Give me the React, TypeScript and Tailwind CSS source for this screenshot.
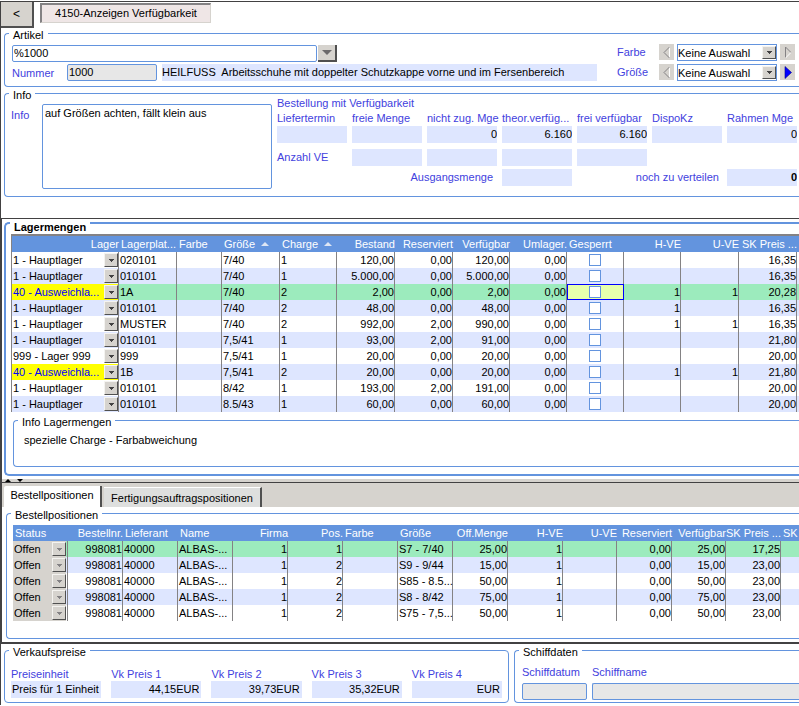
import type { ReactNode } from 'react';
import clsx from 'clsx';

type Column = { label: string; width?: string; right?: boolean; sorted?: boolean };

const stockColumns: Column[] = [
  { label: 'Lager', width: 'w-[107px]', right: true },
  { label: 'Lagerplat...', width: 'w-[58px]' },
  { label: 'Farbe', width: 'w-[45px]' },
  { label: 'Größe', width: 'w-[58px]', sorted: true },
  { label: 'Charge', width: 'w-[57px]', sorted: true },
  { label: 'Bestand', width: 'w-[58px]', right: true },
  { label: 'Reserviert', width: 'w-[58px]', right: true },
  { label: 'Verfügbar', width: 'w-[57px]', right: true },
  { label: 'Umlager.', width: 'w-[57px]', right: true },
  { label: 'Gesperrt', width: 'w-[57px]' },
  { label: 'H-VE', width: 'w-[57px]', right: true },
  { label: 'U-VE', width: 'w-[58px]', right: true },
  { label: 'SK Preis ...', width: 'w-[58px]', right: true },
  { label: '' }
];

const stockRows = [
  ['1 - Hauptlager', '020101', '', '7/40', '1', '120,00', '0,00', '120,00', '0,00', '', '', '', '16,35'],
  ['1 - Hauptlager', '010101', '', '7/40', '1', '5.000,00', '0,00', '5.000,00', '0,00', '', '', '', '16,35'],
  ['40 - Ausweichla...', '1A', '', '7/40', '2', '2,00', '0,00', '2,00', '0,00', '', '1', '1', '20,28'],
  ['1 - Hauptlager', '010101', '', '7/40', '2', '48,00', '0,00', '48,00', '0,00', '', '1', '', '16,35'],
  ['1 - Hauptlager', 'MUSTER', '', '7/40', '2', '992,00', '2,00', '990,00', '0,00', '', '1', '1', '16,35'],
  ['1 - Hauptlager', '010101', '', '7,5/41', '1', '93,00', '2,00', '91,00', '0,00', '', '', '', '21,80'],
  ['999 - Lager 999', '999', '', '7,5/41', '1', '20,00', '0,00', '20,00', '0,00', '', '', '', '20,00'],
  ['40 - Ausweichla...', '1B', '', '7,5/41', '2', '20,00', '0,00', '20,00', '0,00', '', '1', '1', '21,80'],
  ['1 - Hauptlager', '010101', '', '8/42', '1', '193,00', '2,00', '191,00', '0,00', '', '', '', '20,00'],
  ['1 - Hauptlager', '010101', '', '8.5/43', '1', '60,00', '0,00', '60,00', '0,00', '', '', '', '20,00']
];

const orderColumns: Column[] = [
  { label: 'Status', width: 'w-[55px]' },
  { label: 'Bestellnr.', width: 'w-[55px]', right: true },
  { label: 'Lieferant', width: 'w-[55px]' },
  { label: 'Name', width: 'w-[55px]' },
  { label: 'Firma', width: 'w-[55px]', right: true },
  { label: 'Pos.', width: 'w-[55px]', right: true },
  { label: 'Farbe', width: 'w-[55px]' },
  { label: 'Größe', width: 'w-[55px]' },
  { label: 'Off.Menge', width: 'w-[55px]', right: true },
  { label: 'H-VE', width: 'w-[55px]', right: true },
  { label: 'U-VE', width: 'w-[54px]', right: true },
  { label: 'Reserviert', width: 'w-[55px]', right: true },
  { label: 'Verfügbar', width: 'w-[54px]', right: true },
  { label: 'SK Preis ...', width: 'w-[55px]', right: true },
  { label: 'SK' }
];

const orderRows = [
  ['Offen', '998081', '40000', 'ALBAS-...', '1', '1', '', 'S7 - 7/40', '25,00', '1', '', '0,00', '25,00', '17,25', ''],
  ['Offen', '998081', '40000', 'ALBAS-...', '1', '2', '', 'S9 - 9/44', '15,00', '1', '', '0,00', '15,00', '23,00', ''],
  ['Offen', '998081', '40000', 'ALBAS-...', '1', '2', '', 'S85 - 8.5...', '50,00', '1', '', '0,00', '50,00', '23,00', ''],
  ['Offen', '998081', '40000', 'ALBAS-...', '1', '2', '', 'S8 - 8/42', '75,00', '1', '', '0,00', '75,00', '23,00', ''],
  ['Offen', '998081', '40000', 'ALBAS-...', '1', '2', '', 'S75 - 7,5...', '50,00', '1', '', '0,00', '50,00', '23,00', '']
];

const availability = [
  { label: 'Liefertermin', value: '' },
  { label: 'freie Menge', value: '' },
  { label: 'nicht zug. Mge', value: '0' },
  { label: 'theor.verfüg...', value: '6.160' },
  { label: 'frei verfügbar', value: '6.160' },
  { label: 'DispoKz', value: '' },
  { label: 'Rahmen Mge', value: '0' }
];

const prices = [
  { label: 'Preiseinheit', value: 'Preis für 1 Einheit' },
  { label: 'Vk Preis 1', value: '44,15EUR' },
  { label: 'Vk Preis 2', value: '39,73EUR' },
  { label: 'Vk Preis 3', value: '35,32EUR' },
  { label: 'Vk Preis 4', value: 'EUR' }
];

function Group({ title, className, legendClass = 'h-3', children }: { title: string; className?: string; legendClass?: string; children: ReactNode }) {
  return (
    <fieldset className={clsx('min-w-0 border-[#6394de]', className)}>
      <legend className={clsx('ml-1 px-1 leading-4', legendClass)}>{title}</legend>
      {children}
    </fieldset>
  );
}

function ArrowBox({ muted }: { muted?: boolean }) {
  return (
    <span className="pointer-events-none absolute top-px right-0 bottom-px flex w-[14px] items-center justify-center border border-t-[#f4f3f0] border-r-[#505050] border-b-[#505050] border-l-[#f4f3f0] bg-[#d6d3ce]">
      <svg width="5" height="3" viewBox="0 0 5 3" shapeRendering="crispEdges">
        <path d="M0 0h5v1H4v1H3v1H2V2H1V1H0z" fill={muted ? '#848284' : '#424142'} />
      </svg>
    </span>
  );
}

function Combo({ label, value, id, className, muted }: { label?: string; value: string; id?: string; className?: string; muted?: boolean }) {
  return (
    <div className={clsx('relative', className)}>
      <select id={id} aria-label={label} disabled={muted} className={clsx('block h-full w-full appearance-none truncate leading-4 opacity-100', id ? 'pb-px' : 'pl-px')}>
        <option>{value}</option>
      </select>
      <ArrowBox muted={muted} />
    </div>
  );
}

function Step({ label, next, active }: { label: string; next?: boolean; active?: boolean }) {
  return (
    <button aria-label={label} className="flex h-4 w-[15px] items-center justify-center bg-[#d6d3ce]">
      <svg className="shrink-0" width="8" height="13" viewBox="0 0 8 13">
        {active ? (
          <path d="M1 .5v12l6.500-6z" fill="#0000ff" stroke="#000084" strokeWidth=".6" />
        ) : next ? (
          <>
            <path d="M1.500 12V1l5.500 5.500" fill="none" stroke="#848284" />
            <path d="M7 6.500 1.500 12" fill="none" stroke="#ffffff" />
          </>
        ) : (
          <>
            <path d="M6.500 12V1" fill="none" stroke="#ffffff" />
            <path d="M1 6.500 6.500 12" fill="none" stroke="#848284" />
            <path d="M6.500 1 1 6.500" fill="none" stroke="#848284" />
          </>
        )}
      </svg>
    </button>
  );
}

function Value({ id, label, value = '', className }: { id?: string; label?: string; value?: string; className?: string }) {
  return <input id={id} aria-label={label} readOnly defaultValue={value} className={clsx('h-[17px] w-full min-w-0 bg-[#dee6ff] pb-[2px] leading-4', className)} />;
}

function Head({ columns }: { columns: Column[] }) {
  return (
    <thead>
      <tr className="h-4 bg-[#6394de] text-white">
        {columns.map((col, i) => (
          <th key={i} className={clsx('p-0 font-normal whitespace-nowrap', col.width, col.right ? 'text-right' : 'pl-[2px] text-left')}>
            <div className={clsx('flex items-center gap-1.5', col.right && 'justify-end')}>
              {col.label}
              {col.sorted && (
                <svg width="8" height="4" viewBox="0 0 8 4">
                  <path d="M0 4h8L4 0z" fill="#dee6f4" />
                </svg>
              )}
            </div>
          </th>
        ))}
      </tr>
    </thead>
  );
}

export default function App() {
  return (
    <main className="flex w-full flex-col overflow-hidden bg-white pt-px font-['Liberation_Sans',sans-serif] text-[11px] leading-4 text-black">
      <div className="border-t border-l border-[#424142]">
        <header className="flex items-start gap-[6px]">
          <button className="h-[26px] w-[33px] border-r-2 border-b-2 border-[#505050] bg-[#d6d3ce] text-xs">&lt;</button>
          <h1 className="mt-px h-5 w-[171px] border-t-2 border-r border-b border-l-2 border-t-[#848284] border-r-[#d6d3ce] border-b-[#d6d3ce] border-l-[#848284] bg-[#efe6e6] text-center">4150-Anzeigen Verfügbarkeit</h1>
        </header>

        <Group title="Artikel" className="-mt-px ml-[3px] rounded-l-[4px] border-y border-l">
          <div className="flex pt-[5px] pr-1 pb-[5px] pl-[7px]">
            <div className="flex flex-1 flex-col gap-[2px] pt-px">
              <div className="flex gap-px">
                <input aria-label="Artikelsuche" defaultValue="%1000" className="h-[17px] w-[305px] rounded-xs border border-[#6394de] pb-px pl-px" />
                <button aria-label="Artikel auswählen" className="flex h-[17px] w-[19px] items-center justify-center border-r-2 border-b-2 border-[#505050] bg-[#d6d3ce]">
                  <svg width="10" height="5" viewBox="0 0 10 5"><path d="M0 0h10L5 5z" fill="#6b696b" /></svg>
                </button>
              </div>
              <div className="flex">
                <label htmlFor="nummer" className="w-[55px] pt-px text-[#4241de]">Nummer</label>
                <input id="nummer" readOnly defaultValue="1000" className="h-[17px] w-[90px] rounded-xs border border-[#6394de] bg-[#e7e7e7] pb-px pl-px" />
                <Value label="Bezeichnung" value="HEILFUSS  Arbeitsschuhe mit doppelter Schutzkappe vorne und im Fersenbereich" className="ml-[5px] flex-1" />
              </div>
            </div>
            <div className="ml-5 grid grid-cols-[39px_15px_100px_15px] content-start gap-x-[3px] gap-y-[3px]">
              <label htmlFor="farbe" className="text-[#4241de]">Farbe</label>
              <Step label="Vorige Farbe" />
              <Combo id="farbe" value="Keine Auswahl" className="h-[17px] border border-[#6394de]" />
              <Step label="Nächste Farbe" next />
              <label htmlFor="groesse" className="text-[#4241de]">Größe</label>
              <Step label="Vorige Größe" />
              <Combo id="groesse" value="Keine Auswahl" className="h-[17px] border border-[#6394de]" />
              <Step label="Nächste Größe" next active />
            </div>
          </div>
        </Group>

        <Group title="Info" className="ml-[3px] rounded-l-[4px] border-y border-l">
          <div className="flex pt-[5px] pr-[2px] pb-[7px] pl-[6px]">
            <label htmlFor="info" className="w-[31px] pt-[3px] text-[#4241de]">Info</label>
            <textarea id="info" defaultValue="auf Größen achten, fällt klein aus" className="mr-[5px] h-[85px] w-[230px] resize-none rounded-xs border border-[#6394de] px-[2px]" />
            <div className="-mt-[9px] flex-1 text-[#4241de]">
              <h2 className="h-[15px]">Bestellung mit Verfügbarkeit</h2>
              <div className="grid grid-cols-7 gap-x-[5px]">
                {availability.map((item) => (
                  <label key={item.label} className="block whitespace-nowrap">
                    {item.label}
                    <Value value={item.value} className="block text-right text-black" />
                  </label>
                ))}
              </div>
              <div className="mt-[6px] grid grid-cols-7 gap-x-[5px] gap-y-[3px]">
                <span>Anzahl VE</span>
                <Value label="Anzahl VE freie Menge" />
                <Value label="Anzahl VE nicht zugeteilt" />
                <Value label="Anzahl VE theoretisch verfügbar" />
                <Value label="Anzahl VE frei verfügbar" />
                <label htmlFor="ausgang" className="col-span-2 col-start-2 pr-1 text-right">Ausgangsmenge</label>
                <Value id="ausgang" />
                <label htmlFor="verteilen" className="col-span-2 pr-[3px] text-right">noch zu verteilen</label>
                <Value id="verteilen" value="0" className="text-right font-bold text-black" />
              </div>
            </div>
          </div>
        </Group>
        <div className="h-[21px]" />
      </div>

      <div className="border-t border-l-2 border-[#424142]">
        <Group title="Lagermengen" className="ml-[2px] rounded-l-[5px] border-y-2 border-l-2 pb-[7px]" legendClass="h-2 font-bold">
          <div className="mt-[7px] ml-[5px] border-t-2 border-l border-[#848284]">
            <table className="w-full table-fixed border-separate border-spacing-0">
              <Head columns={stockColumns} />
              <tbody>
                {stockRows.map((row, r) => (
                  <tr key={r} className={clsx('h-4', r === 2 ? 'bg-[#9cebbd]' : r % 2 ? 'bg-[#dee6ff]' : 'bg-white')}>
                    {row.map((cell, c) => (
                      <td
                        key={c}
                        className={clsx(
                          'border-r border-[#848284] p-0 whitespace-nowrap',
                          c > 4 && 'text-right',
                          c > 0 && c !== 9 && 'pl-px',
                          c === 0 && row[0].startsWith('40') && 'bg-[#ffff00] text-[#0000ff]',
                          c === 9 && r === 2 && 'bg-[#e7ffad] outline-1 -outline-offset-1 outline-[#0000ff]'
                        )}
                      >
                        {c === 0 ? (
                          <Combo label="Lager" value={cell} className="h-4" />
                        ) : c === 9 ? (
                          <input type="checkbox" aria-label="Gesperrt" className="mx-auto block size-3 appearance-none border border-[#6394de] bg-white" />
                        ) : (
                          cell
                        )}
                      </td>
                    ))}
                    <td className="p-0" />
                  </tr>
                ))}
              </tbody>
            </table>
          </div>
          <Group title="Info Lagermengen" className="mt-[2px] ml-[7px] rounded-l-[4px] border-y border-l">
            <p className="h-10 pt-[6px] pl-[10px]">spezielle Charge - Farbabweichung</p>
          </Group>
        </Group>
        <div className="mt-[3px] flex h-[4px] items-end gap-[6px] border-b border-[#424142] bg-[#d6d3ce] pl-[3px]">
          <svg width="6" height="3" viewBox="0 0 6 3"><path d="M0 3h6L3 0z" /></svg>
          <svg width="6" height="3" viewBox="0 0 6 3"><path d="M0 0h6L3 3z" /></svg>
        </div>

        <div role="tablist" className="flex items-end gap-[2px] bg-[#d6d3ce] pt-[3px] pl-[2px]">
          <button role="tab" aria-selected="true" className="h-[21px] w-[98px] rounded-tl-xs border-r-2 border-[#505050] bg-white pb-[3px]">Bestellpositionen</button>
          <button role="tab" aria-selected="false" className="h-5 w-[158px] border-t border-r-2 border-t-white border-r-[#505050] bg-[#dedfde]">Fertigungsauftragspositionen</button>
        </div>

        <Group title="Bestellpositionen" className="ml-[4px] rounded-l-[4px] border-y border-l pb-[17px]">
          <table className="mt-[6px] ml-[6px] w-[calc(100%-6px)] table-fixed border-separate border-spacing-0">
            <Head columns={orderColumns} />
            <tbody>
              {orderRows.map((row, r) => (
                <tr key={r} className={clsx('h-4', r === 0 ? 'bg-[#9cebbd]' : r % 2 ? 'bg-[#dee6ff]' : 'bg-white')}>
                  {row.map((cell, c) => (
                    <td key={c} className={clsx('p-0 whitespace-nowrap', c < 14 && 'border-r border-[#848284]', c > 0 && 'pl-px', orderColumns[c].right && 'text-right')}>
                      {c === 0 ? <Combo label="Status" value={cell} muted className="h-4 w-[53px] bg-[#d6d3ce]" /> : cell}
                    </td>
                  ))}
                </tr>
              ))}
            </tbody>
          </table>
        </Group>
        <div className="h-[3px]" />
      </div>

      <footer className="flex gap-[5px] border-t-2 border-l border-[#424142] pb-[2px] pl-[3px]">
        <Group title="Verkaufspreise" className="w-[505px] shrink-0 rounded-[4px] border">
          <div className="grid grid-cols-5 gap-x-[10px] px-[6px] pt-[11px] pb-1">
            {prices.map((price, i) => (
              <label key={price.label} className="block leading-[14px] text-[#4241de]">
                {price.label}
                <Value value={price.value} className={clsx('block text-black', i ? 'pr-[2px] text-right' : 'pl-px')} />
              </label>
            ))}
          </div>
        </Group>
        <Group title="Schiffdaten" className="flex-1 rounded-l-[4px] border-y border-l">
          <div className="flex gap-[5px] pt-2 pl-[7px] text-[#4241de]">
            <label className="block w-[65px]">
              Schiffdatum
              <input readOnly className="mt-[3px] block h-[17px] w-full rounded-xs border border-[#6394de] bg-[#e7e7e7]" />
            </label>
            <label className="block flex-1">
              Schiffname
              <input readOnly className="mt-[3px] block h-[17px] w-full rounded-l-xs border-y border-l border-[#6394de] bg-[#e7e7e7]" />
            </label>
          </div>
        </Group>
      </footer>
    </main>
  );
}
